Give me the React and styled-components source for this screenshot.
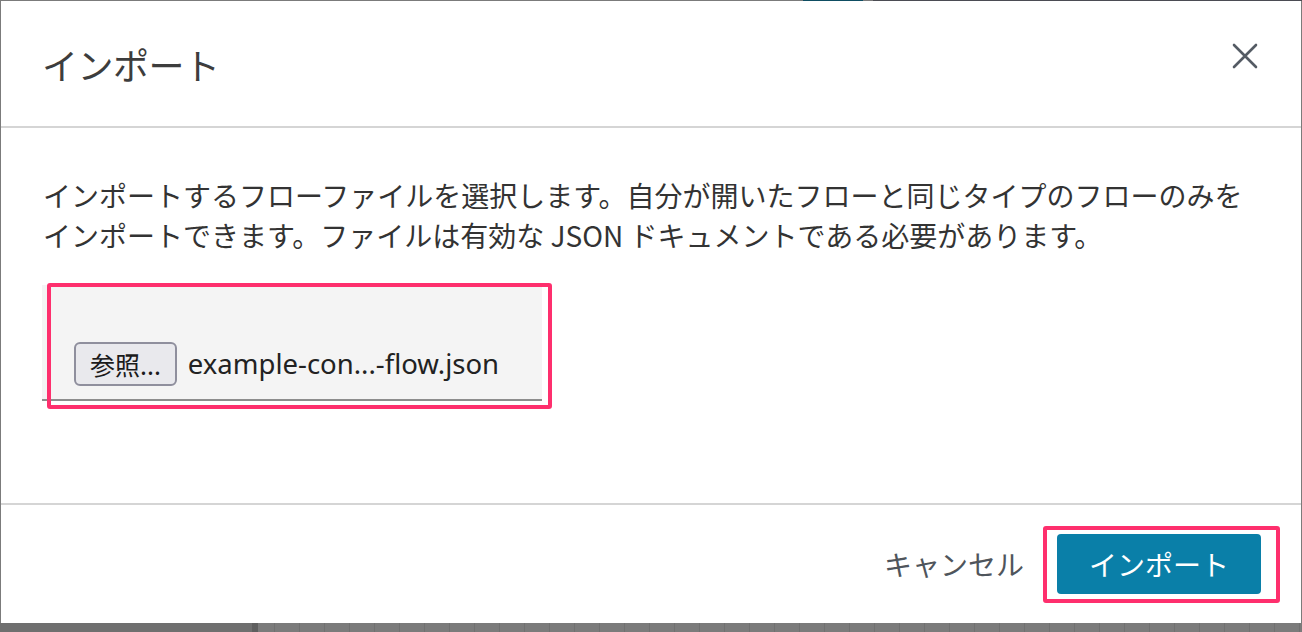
import React from "react";
import styled, { createGlobalStyle } from "styled-components";

const GlobalStyle = createGlobalStyle`
  html, body {
    margin: 0;
    padding: 0;
    height: 632px;
    overflow: hidden;
  }
  body {
    font-family: "Noto Sans CJK JP", "Noto Sans", sans-serif;
    background:
      linear-gradient(90deg, #7b7b7b 0 803px, #0e4d62 803px 863px, #7b7b7b 863px 873px, #4b4c53 873px) top left / 100% 1px no-repeat,
      linear-gradient(90deg, #6f6f6f 0 252px, #5f5f5f 252px 258px, transparent 258px) left bottom / 100% 9px no-repeat,
      repeating-linear-gradient(90deg, #7b7b7b 0 24px, #707070 24px 25px);
  }
`;

const Page = styled.div`
  padding: 1px 1px 0 1px;
`;

const Dialog = styled.div`
  width: 1300px;
  height: 622px;
  background: #ffffff;
  display: flex;
  flex-direction: column;
  box-sizing: border-box;
`;

const Header = styled.header`
  height: 125px;
  flex: none;
  display: flex;
  justify-content: space-between;
  padding: 0 42px 0 41px;
  border-bottom: 2px solid #d5d5d5;
`;

const Title = styled.h1`
  align-self: center;
  margin: 0;
  font-size: 36px;
  font-weight: 400;
  color: #3d3d3d;
  letter-spacing: -0.5px;
`;

const CloseButton = styled.button`
  align-self: flex-start;
  margin-top: 41px;
  width: 28px;
  height: 28px;
  padding: 0;
  border: none;
  background: none;
  display: flex;
  align-items: center;
  justify-content: center;
  cursor: pointer;
`;

const Body = styled.section`
  flex: 1;
  padding: 47px 42px 0;
`;

const Description = styled.p`
  margin: 0;
  font-size: 28px;
  line-height: 40px;
  color: #333333;
  white-space: nowrap;
`;

const FileField = styled.div`
  position: relative;
  margin: 30px 0 0 -1px;
  width: 500px;
  height: 116px;
  box-sizing: border-box;
  background: #f4f4f4;
  border-bottom: 2px solid #8d8d8d;
  display: flex;
  align-items: flex-end;
  gap: 11px;
  padding: 0 0 13px 32px;
`;

const BrowseButton = styled.button`
  height: 44px;
  padding: 0 14px;
  background: #e9e9ed;
  border: 2px solid #8f8f9d;
  border-radius: 6px;
  font-family: "Noto Sans CJK JP", "Noto Sans", sans-serif;
  font-size: 25px;
  color: #1b1b1b;
  display: flex;
  align-items: center;
  line-height: 1;
`;

const FileName = styled.span`
  font-family: "Noto Sans", "Noto Sans CJK JP", sans-serif;
  font-size: 27.5px;
  line-height: 44px;
  color: #222222;
`;

const Highlight = styled.div`
  position: absolute;
  box-sizing: border-box;
  border: 4px solid #fe2f6d;
  border-radius: 3px;
  pointer-events: none;
  left: ${(p) => p.$l}px;
  top: ${(p) => p.$t}px;
  right: ${(p) => p.$r}px;
  bottom: ${(p) => p.$b}px;
`;

const Footer = styled.footer`
  height: 118px;
  flex: none;
  border-top: 2px solid #d5d5d5;
  display: flex;
  justify-content: flex-end;
  align-items: center;
  padding-right: 40px;
`;

const CancelButton = styled.button`
  margin-right: 33px;
  padding: 0;
  border: none;
  background: none;
  font-family: "Noto Sans CJK JP", "Noto Sans", sans-serif;
  font-size: 28px;
  color: #4f555c;
  cursor: pointer;
`;

const PrimaryWrap = styled.div`
  position: relative;
  display: flex;
`;

const PrimaryButton = styled.button`
  width: 204px;
  height: 60px;
  border: none;
  border-radius: 4px;
  background: #0a7fa8;
  color: #ffffff;
  font-family: "Noto Sans CJK JP", "Noto Sans", sans-serif;
  font-size: 28px;
  cursor: pointer;
`;

const CloseIcon = () => (
  <svg width="26" height="26" viewBox="0 0 26 26" aria-hidden="true">
    <path
      d="M2 2 L24 24 M24 2 L2 24"
      stroke="#545b64"
      strokeWidth="2.6"
      strokeLinecap="round"
      fill="none"
    />
  </svg>
);

export default function App() {
  return (
    <>
      <GlobalStyle />
      <Page>
        <Dialog>
          <Header>
            <Title>インポート</Title>
            <CloseButton aria-label="閉じる">
              <CloseIcon />
            </CloseButton>
          </Header>
          <Body>
            <Description>
              インポートするフローファイルを選択します。自分が開いたフローと同じタイプのフローのみを
              <br />
              インポートできます。ファイルは有効な JSON ドキュメントである必要があります。
            </Description>
            <FileField>
              <BrowseButton>参照...</BrowseButton>
              <FileName>example-con...-flow.json</FileName>
              <Highlight $l={5} $t={-2} $r={-10} $b={-10} />
            </FileField>
          </Body>
          <Footer>
            <CancelButton>キャンセル</CancelButton>
            <PrimaryWrap>
              <PrimaryButton>インポート</PrimaryButton>
              <Highlight $l={-14} $t={-8} $r={-19} $b={-9} />
            </PrimaryWrap>
          </Footer>
        </Dialog>
      </Page>
    </>
  );
}
